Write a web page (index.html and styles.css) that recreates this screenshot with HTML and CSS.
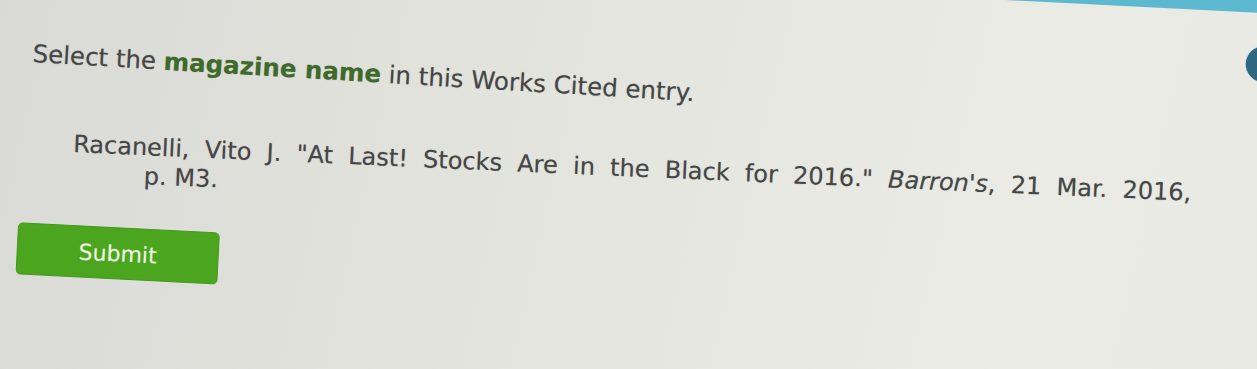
FILE: index.html
```html
<!DOCTYPE html>
<html lang="en">

<head>
    <meta charset="UTF-8">
    <meta name="viewport" content="width=device-width, initial-scale=1.0">
    <title>Works Cited</title>
    <link rel="stylesheet" href="styles.css">
</head>

<body>
    <div class="screen">
        <div class="topbar"></div>
        <div class="side-dot"></div>

        <div class="content">
            <p class="prompt">Select the <strong>magazine name</strong> in this Works Cited entry.</p>

            <div class="citation">
                <div class="cite-line">Racanelli, Vito J. "At Last! Stocks Are in the Black for 2016." <em>Barron's</em>, 21 Mar. 2016,</div>
                <div class="cite-cont">p. M3.</div>
            </div>

            <button type="button" class="submit-btn">Submit</button>
        </div>
    </div>
</body>

</html>
```

FILE: styles.css
```css
body {
    margin: 0;
    padding: 0;
    height: 369px;
    overflow: hidden;
    font-family: "DejaVu Sans", Verdana, sans-serif;
    background: linear-gradient(100deg, #d8d8d4 0%, #e3e3de 35%, #eaeae5 70%, #e8e8e3 100%);
}

/* the photo is slightly tilted */
.screen {
    position: relative;
    width: 1400px;
    height: 600px;
    transform-origin: 0 0;
    transform: translate(0, -111px) rotate(2.9deg);
    background: linear-gradient(100deg, #d9d9d5 0%, #e3e3de 35%, #ebebe6 70%, #e9e9e4 100%);
}

.topbar {
    height: 60px;
    background-color: #5cb9cf;
}

.side-dot {
    position: absolute;
    left: 1253px;
    top: 93px;
    width: 36px;
    height: 36px;
    border-radius: 50%;
    background-color: #2f6680;
    box-shadow: 0 0 0 1px #d6e2e6;
}

.content {
    padding: 88px 0 0 35px;
    color: #464646;
    text-shadow: 0 0 1px rgba(70, 70, 70, 0.45);
}

.prompt {
    margin: 0;
    padding-left: 6px;
    font-size: 24.5px;
    line-height: 30px;
    transform-origin: left center;
    transform: rotate(0.5deg);
}

.prompt strong {
    color: #3f6a2b;
    text-shadow: 0 0 1px rgba(63, 106, 43, 0.45);
}

.citation {
    margin: 59px 0 0 51px;
    width: 1119px;
    font-size: 24px;
    line-height: 29px;
    transform-origin: left top;
    transform: rotate(-0.4deg);
}

.cite-line {
    text-align: justify;
    text-align-last: justify;
}

.cite-cont {
    padding-left: 72px;
}

.submit-btn {
    display: block;
    margin-top: 37px;
    width: 202px;
    height: 52px;
    background-color: #4ba51f;
    color: #e9f5dc;
    font-family: "DejaVu Sans", Verdana, sans-serif;
    font-size: 22px;
    text-shadow: 0 0 1px rgba(233, 245, 220, 0.5);
    border: 1px solid #44991b;
    border-radius: 5px;
    cursor: pointer;
}
```
